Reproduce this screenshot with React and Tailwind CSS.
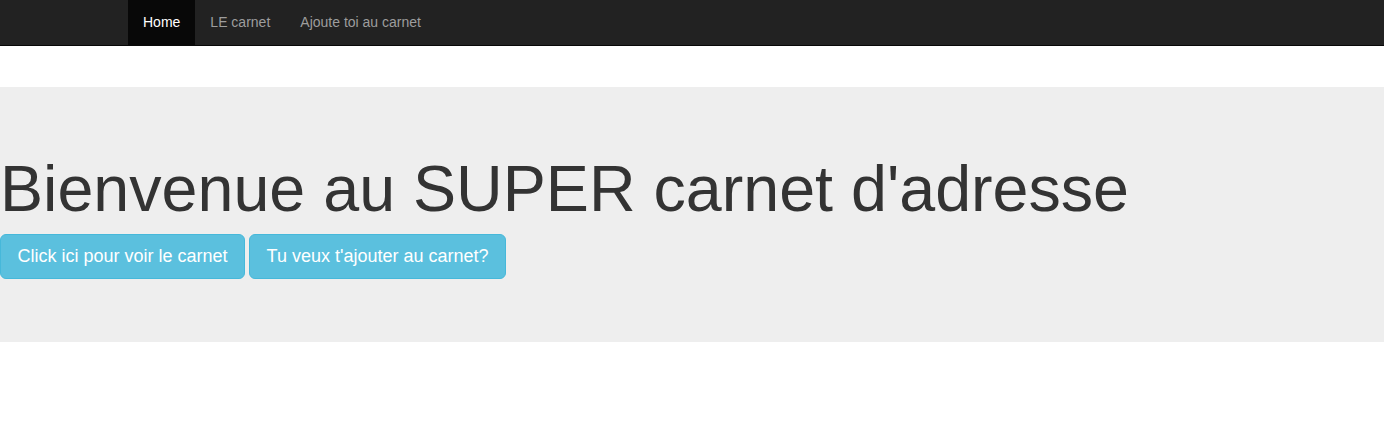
export default function App() {
  const font = { fontFamily: '"Liberation Sans", Helvetica, Arial, sans-serif' };
  return (
    <div className="min-h-[443px] bg-white text-[#333]" style={font}>
      <nav className="h-[46px] bg-[#222] border-b border-[#080808]">
        <ul className="flex h-[45px] pl-[128px] text-[14px]">
          <li className="flex items-center px-[15px] bg-[#080808] text-white">Home</li>
          <li className="flex items-center px-[15px] text-[#9d9d9d]">LE carnet</li>
          <li className="flex items-center px-[15px] text-[#9d9d9d]">Ajoute toi au carnet</li>
        </ul>
      </nav>
      <div className="mt-[41px] bg-[#eee] pt-[48px] pb-[48px]">
        <h1 className="mt-[20px] mb-[10px] text-[64.6px] leading-[69px] font-normal">
          Bienvenue au SUPER carnet d'adresse
        </h1>
        <p className="mb-[15px] flex gap-[4px]">
          <a className="inline-block px-[16.5px] py-[10px] text-[18px] leading-[23px] text-white bg-[#5bc0de] border border-[#46b8da] rounded-[6px]">
            Click ici pour voir le carnet
          </a>
          <a className="inline-block px-[16.5px] py-[10px] text-[18px] leading-[23px] text-white bg-[#5bc0de] border border-[#46b8da] rounded-[6px]">
            Tu veux t'ajouter au carnet?
          </a>
        </p>
      </div>
    </div>
  );
}
